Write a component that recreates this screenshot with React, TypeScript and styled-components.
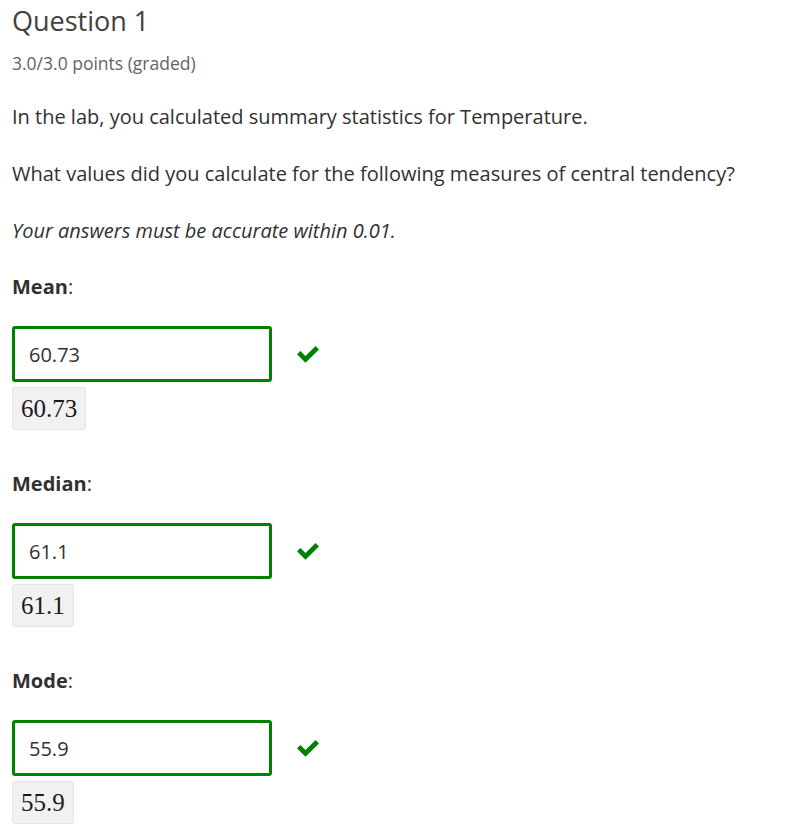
import React from "react";
import styled, { createGlobalStyle } from "styled-components";

const Global = createGlobalStyle`
  html, body { margin: 0; padding: 0; background: #fff; }
  body { font-family: "Open Sans", "DejaVu Sans", sans-serif; color: #313131; }
`;

const Page = styled.div`
  padding: 0 12px;
  display: flex;
  flex-direction: column;
`;

const Title = styled.h2`
  margin: 4px 0 0;
  font-size: 27px;
  font-weight: 400;
  line-height: 33px;
  color: #414141;
`;

const Points = styled.div`
  margin-top: 16px;
  font-size: 17.5px;
  line-height: 20px;
  color: #646464;
`;

const Para = styled.p<{ $italic?: boolean }>`
  margin: 0;
  margin-top: 30px;
  font-size: 20px;
  line-height: 27px;
  font-style: ${(p) => (p.$italic ? "italic" : "normal")};
`;

const Section = styled.section`
  display: flex;
  flex-direction: column;
  margin-top: 29px;
  & + & { margin-top: 40px; }
`;

const Label = styled.div`
  font-size: 20px;
  line-height: 27px;
  b { font-weight: 700; }
`;

const Row = styled.div`
  margin-top: 26px;
  display: flex;
  align-items: center;
  gap: 25px;
`;

const Input = styled.div`
  box-sizing: border-box;
  width: 260px;
  height: 56px;
  border: 3px solid #008100;
  border-radius: 3px;
  padding: 0 14px;
  display: flex;
  align-items: center;
  font-size: 20px;
  color: #313131;
`;

const Check = styled.svg`
  width: 22px;
  height: 17px;
  fill: #008100;
`;

const MathBox = styled.div`
  align-self: flex-start;
  margin-top: 5px;
  box-sizing: border-box;
  height: 43px;
  padding: 0 8px;
  display: flex;
  align-items: center;
  background: #f1f1f1;
  border: 1px solid #e4e4e4;
  border-radius: 3px;
  font-family: "Liberation Serif", "DejaVu Serif", serif;
  font-size: 25px;
  color: #1a1a1a;
`;

const Field = ({ label, value }: { label: string; value: string }) => (
  <Section>
    <Label>
      <b>{label}</b>:
    </Label>
    <Row>
      <Input>{value}</Input>
      <Check viewBox="0 0 22 17">
        <path d="M0 8.3 L3.4 4.9 L8.5 9.9 L18.6 0 L22 3.4 L8.5 16.8 Z" />
      </Check>
    </Row>
    <MathBox>{value}</MathBox>
  </Section>
);

export default function App() {
  return (
    <>
      <Global />
      <Page>
        <Title>Question 1</Title>
        <Points>3.0/3.0 points (graded)</Points>
        <Para>In the lab, you calculated summary statistics for Temperature.</Para>
        <Para>What values did you calculate for the following measures of central tendency?</Para>
        <Para $italic>Your answers must be accurate within 0.01.</Para>
        <Field label="Mean" value="60.73" />
        <Field label="Median" value="61.1" />
        <Field label="Mode" value="55.9" />
      </Page>
    </>
  );
}
